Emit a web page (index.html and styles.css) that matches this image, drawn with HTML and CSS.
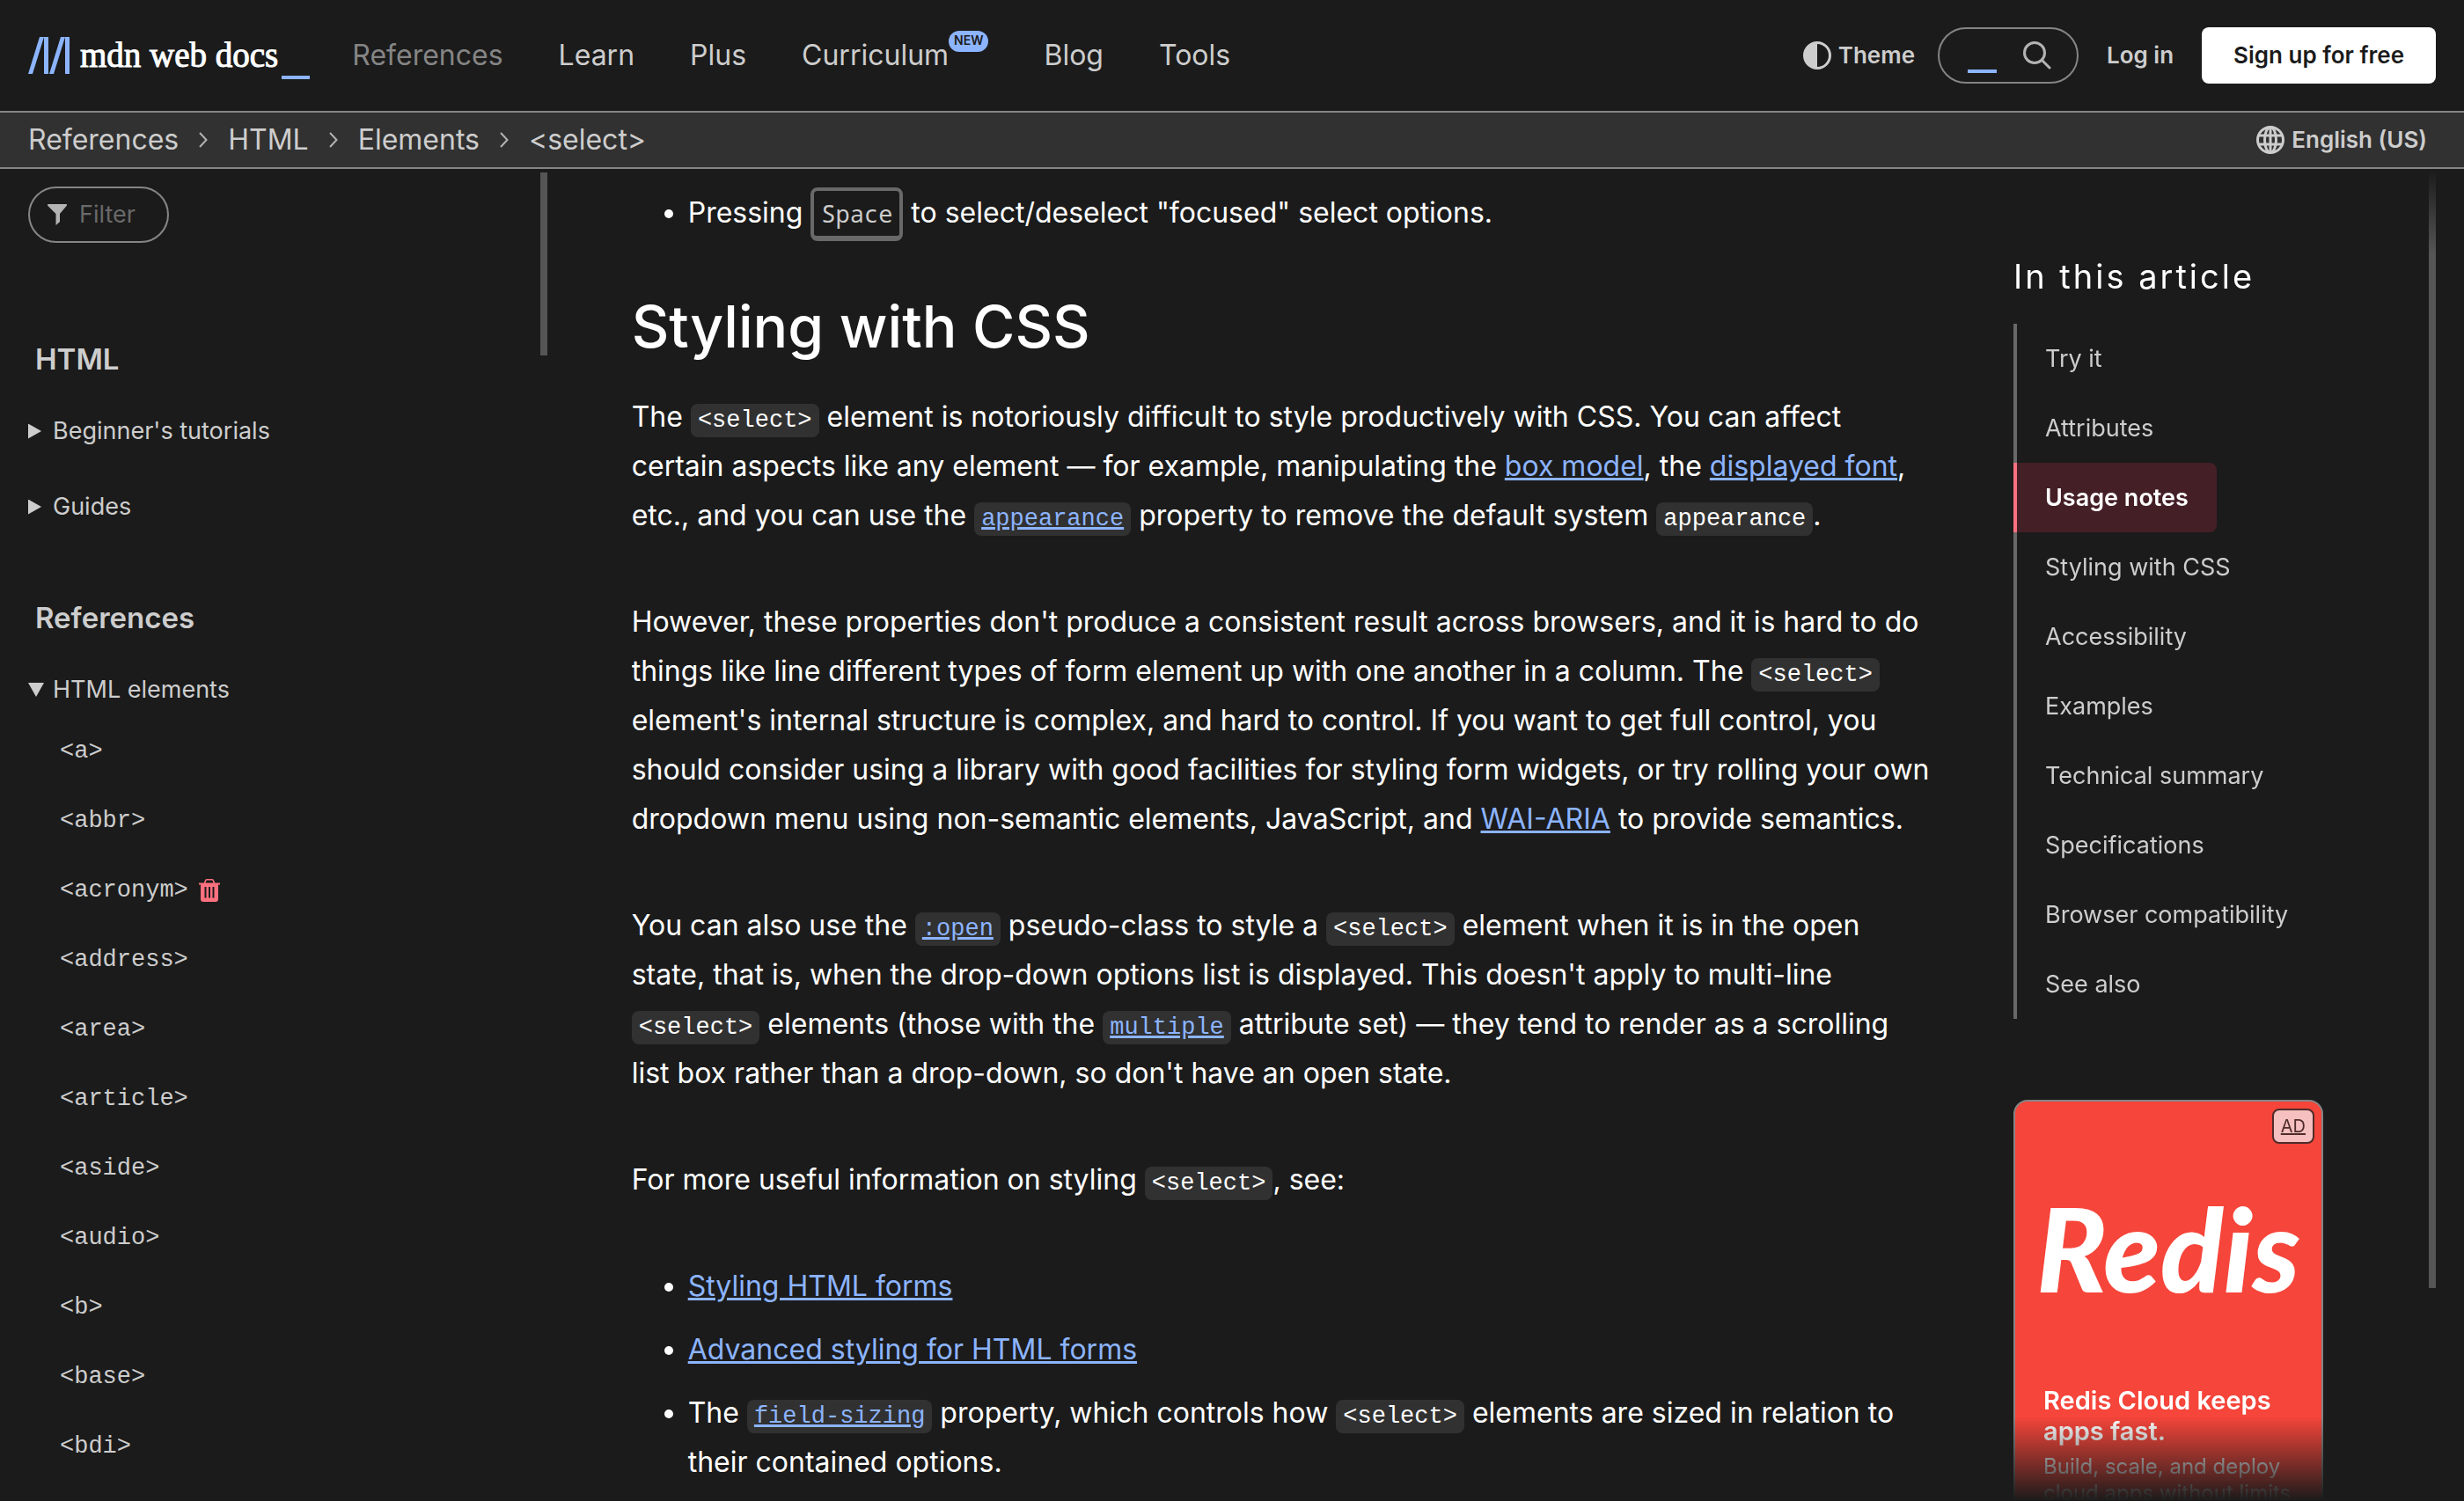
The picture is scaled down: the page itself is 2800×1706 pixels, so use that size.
FILE: index.html
```html
<!DOCTYPE html>
<html lang="en-US">
<head>
<meta charset="utf-8">
<title>&lt;select&gt; - HTML | MDN</title>
<link rel="stylesheet" href="styles.css">
</head>
<body>
<div class="app">
  <header class="top">
    <a class="logo" href="#">
      <svg class="logo-mark" viewBox="0 0 47 42" aria-hidden="true"><path d="M13 0h5L5 42H0zM18 0h5v42h-5zM37 0h5L29 42h-5zM42 0h5v42h-5z"/></svg>
      <span class="logo-name">mdn web docs</span>
      <span class="logo-cursor"></span>
    </a>
    <nav class="menu" aria-label="Main">
      <a class="menu-link current" href="#">References</a>
      <a class="menu-link" href="#">Learn</a>
      <a class="menu-link" href="#">Plus</a>
      <a class="menu-link" href="#">Curriculum<sup class="badge">NEW</sup></a>
      <a class="menu-link" href="#">Blog</a>
      <a class="menu-link" href="#">Tools</a>
    </nav>
    <div class="actions">
      <button class="plain-button" type="button">
        <svg class="icon" viewBox="0 0 32 32" aria-hidden="true"><circle cx="16" cy="16" r="14.500" fill="none" stroke="currentColor" stroke-width="3"/><path d="M16 1v30A15 15 0 0 1 16 1z" fill="currentColor"/></svg>Theme
      </button>
      <form class="search">
        <input class="search-input" type="search" aria-label="Search MDN">
        <span class="search-cursor"></span>
        <button class="search-button" type="submit" aria-label="Search"><svg class="icon" viewBox="0 0 32 32" aria-hidden="true"><g fill="none" stroke="currentColor" stroke-width="3" stroke-linecap="round"><circle cx="13" cy="13" r="11.500"/><path d="M21.500 21.500 30 30"/></g></svg></button>
      </form>
      <a class="login" href="#">Log in</a>
      <a class="signup" href="#">Sign up for free</a>
    </div>
  </header>

  <div class="crumb-bar">
    <ol class="crumbs">
      <li class="crumb"><a href="#">References</a></li>
      <li class="crumb"><svg class="chevron" viewBox="0 0 10 18" aria-hidden="true"><path d="M1 1l7.500 8L1 17"/></svg><a href="#">HTML</a></li>
      <li class="crumb"><svg class="chevron" viewBox="0 0 10 18" aria-hidden="true"><path d="M1 1l7.500 8L1 17"/></svg><a href="#">Elements</a></li>
      <li class="crumb"><svg class="chevron" viewBox="0 0 10 18" aria-hidden="true"><path d="M1 1l7.500 8L1 17"/></svg><a href="#">&lt;select&gt;</a></li>
    </ol>
    <button class="plain-button" type="button">
      <svg class="icon" viewBox="0 0 32 32" aria-hidden="true"><g fill="none" stroke="currentColor" stroke-width="3"><circle cx="16" cy="16" r="14.500"/><ellipse cx="16" cy="16" rx="6.500" ry="14.500"/><path d="M16 1v30M2.500 11h27M2.500 21h27"/></g></svg>English (US)
    </button>
  </div>

  <div class="columns">
    <aside class="sidebar">
      <div class="sidebar-body">
        <label class="filter">
          <svg class="funnel" viewBox="0 0 22 24" aria-hidden="true"><path d="M1 0h20q2 0 .6 2L14 11v9l-4.500 4V11L.4 2Q-.8 0 1 0z"/></svg>
          <input class="filter-input" type="text" placeholder="Filter" aria-label="Filter">
        </label>
        <h2 class="side-title first">HTML</h2>
        <details class="group"><summary>Beginner's tutorials</summary></details>
        <details class="group"><summary>Guides</summary></details>
        <h2 class="side-title">References</h2>
        <details class="group" open>
          <summary>HTML elements</summary>
          <ul class="tags">
            <li><a href="#">&lt;a&gt;</a></li>
            <li><a href="#">&lt;abbr&gt;</a></li>
            <li><a href="#">&lt;acronym&gt;</a><svg class="trash" viewBox="0 0 24 26" role="img" aria-label="Deprecated"><path fill="none" stroke="currentColor" stroke-width="1.600" d="M6.500 5 7.500 2q.3-1.200 1.500-1.200h6q1.200 0 1.500 1.200l1 3"/><path fill="currentColor" fill-rule="evenodd" d="M0 4.500h24v2h-2V23q0 3-3 3H5q-3 0-3-3V6.500H0zM6.500 9v12.500h2V9zm4.500 0v12.500h2V9zm4.500 0v12.500h2V9z"/></svg></li>
            <li><a href="#">&lt;address&gt;</a></li>
            <li><a href="#">&lt;area&gt;</a></li>
            <li><a href="#">&lt;article&gt;</a></li>
            <li><a href="#">&lt;aside&gt;</a></li>
            <li><a href="#">&lt;audio&gt;</a></li>
            <li><a href="#">&lt;b&gt;</a></li>
            <li><a href="#">&lt;base&gt;</a></li>
            <li><a href="#">&lt;bdi&gt;</a></li>
          </ul>
        </details>
      </div>
      <div class="scroll-track"><div class="scroll-thumb side-thumb"></div></div>
    </aside>

    <main class="article">
      <ul>
        <li>Pressing <kbd>Space</kbd> to select/deselect "focused" select options.</li>
      </ul>
      <h2>Styling with CSS</h2>
      <p>The <code>&lt;select&gt;</code> element is notoriously difficult to style productively with CSS. You can affect certain aspects like any element — for example, manipulating the <a href="#">box model</a>, the <a href="#">displayed font</a>, etc., and you can use the <a href="#"><code>appearance</code></a> property to remove the default system <code>appearance</code>.</p>
      <p>However, these properties don't produce a consistent result across browsers, and it is hard to do things like line different types of form element up with one another in a column. The <code>&lt;select&gt;</code> element's internal structure is complex, and hard to control. If you want to get full control, you should consider using a library with good facilities for styling form widgets, or try rolling your own dropdown menu using non-semantic elements, JavaScript, and <a href="#">WAI-ARIA</a> to provide semantics.</p>
      <p>You can also use the <a href="#"><code>:open</code></a> pseudo-class to style a <code>&lt;select&gt;</code> element when it is in the open state, that is, when the drop-down options list is displayed. This doesn't apply to multi-line <code>&lt;select&gt;</code> elements (those with the <a href="#"><code>multiple</code></a> attribute set) — they tend to render as a scrolling list box rather than a drop-down, so don't have an open state.</p>
      <p>For more useful information on styling <code>&lt;select&gt;</code>, see:</p>
      <ul>
        <li><a href="#">Styling HTML forms</a></li>
        <li><a href="#">Advanced styling for HTML forms</a></li>
        <li>The <a href="#"><code>field-sizing</code></a> property, which controls how <code>&lt;select&gt;</code> elements are sized in relation to their contained options.</li>
      </ul>
    </main>

    <aside class="rail">
      <div class="rail-body">
        <nav class="toc" aria-labelledby="toc-title">
          <h2 class="toc-title" id="toc-title">In this article</h2>
          <ul class="toc-list">
            <li><a href="#">Try it</a></li>
            <li><a href="#">Attributes</a></li>
            <li><a class="active" href="#">Usage notes</a></li>
            <li><a href="#">Styling with CSS</a></li>
            <li><a href="#">Accessibility</a></li>
            <li><a href="#">Examples</a></li>
            <li><a href="#">Technical summary</a></li>
            <li><a href="#">Specifications</a></li>
            <li><a href="#">Browser compatibility</a></li>
            <li><a href="#">See also</a></li>
          </ul>
        </nav>
        <section class="ad" aria-label="Advertisement">
          <a class="ad-note" href="#">AD</a>
          <div class="ad-logo">Redis</div>
          <a class="ad-copy" href="#">
            <strong>Redis Cloud keeps apps fast.</strong>
            <span>Build, scale, and deploy cloud apps without limits</span>
          </a>
        </section>
      </div>
      <div class="scroll-track"><div class="scroll-thumb page-thumb"></div></div>
    </aside>
  </div>
</div>
</body>
</html>
```
FILE: styles.css
```css
:root {
  --bg: #1b1b1b;
  --bg-2: #313131;
  --text: #ffffff;
  --text-2: #cdcdcd;
  --muted: #858585;
  --line: #696969;
  --thumb: #555555;
  --link: #8cb4ff;
  --red: #ff707f;
  --sans: Inter, "Noto Sans", sans-serif;
  --mono: "Liberation Mono", monospace;
}

* { box-sizing: border-box; }

body {
  margin: 0;
  background: var(--bg);
  color: var(--text);
  font: 32px/56px var(--sans);
}

a { color: inherit; text-decoration: none; }
ul, ol, h2, p { margin: 0; padding: 0; }
button, input { font: inherit; color: inherit; background: none; border: 0; padding: 0; margin: 0; }
svg { flex: none; display: block; }

.app {
  display: flex;
  flex-direction: column;
  height: 100vh;
  overflow: hidden;
}

/* Top bar */
.top {
  display: flex;
  align-items: center;
  height: 126px;
  flex: none;
  padding: 0 32px;
  color: var(--text-2);
}

.logo { display: flex; align-items: center; color: var(--text); }
.logo-mark { width: 47px; height: 42px; fill: var(--link); }
.logo-name {
  margin-left: 12px;
  font-family: "Liberation Serif", serif;
  font-size: 39px;
  -webkit-text-stroke: 1px currentColor;
}
.logo-cursor { width: 32px; height: 4px; margin: 50px 0 0 4px; background: var(--link); }

.menu { display: flex; gap: 63px; margin-left: 48px; }
.menu-link { display: flex; }
.menu-link.current { color: var(--muted); }
.badge {
  align-self: flex-start;
  height: 24px;
  padding: 0 6px;
  border-radius: 12px;
  background: var(--link);
  color: var(--bg);
  font-size: 14px;
  font-weight: 600;
  line-height: 22px;
}

.actions {
  display: flex;
  align-items: center;
  margin-left: auto;
  font-size: 26px;
  font-weight: 600;
}
.plain-button {
  display: flex;
  align-items: center;
  gap: 8px;
  color: var(--text-2);
  font-size: 26px;
  font-weight: 600;
}
.icon { width: 32px; height: 32px; }

.search {
  display: flex;
  align-items: center;
  width: 160px;
  height: 64px;
  margin: 0 32px 0 26px;
  padding: 0 29px 0 32px;
  border: 2px solid var(--muted);
  border-radius: 32px;
}
.search-input { width: 0; outline: 0; appearance: none; }
.search-cursor { width: 33px; height: 4px; margin-top: 36px; background: var(--link); }
.search-button { margin-left: auto; color: #b3b3b3; }

.signup {
  display: flex;
  align-items: center;
  height: 64px;
  margin-left: 32px;
  padding: 0 36px;
  border-radius: 8px;
  background: #fff;
  color: var(--bg);
}

/* Breadcrumbs */
.crumb-bar {
  display: flex;
  align-items: center;
  justify-content: space-between;
  height: 66px;
  flex: none;
  padding: 0 42px 0 32px;
  border: solid var(--muted);
  border-width: 2px 0;
  background: var(--bg-2);
  color: var(--text-2);
}
.crumbs { display: flex; list-style: none; }
.crumb { display: flex; align-items: center; }
.chevron {
  width: 10px;
  height: 18px;
  margin: 0 23px;
  fill: none;
  stroke: #b3b3b3;
  stroke-width: 2;
}

/* Page columns */
.columns {
  display: grid;
  grid-template-columns: 1fr 2.48fr 480px;
  gap: 88px;
  flex: 1;
  min-height: 0;
  padding: 0 32px;
}

.scroll-track { flex: none; width: 8px; padding-top: 4px; }
.scroll-thumb { background: var(--thumb); }
.side-thumb { height: 208px; }
.page-thumb { height: 84%; }

/* Sidebar */
.sidebar {
  display: flex;
  overflow: hidden;
  margin-right: 8px;
  color: var(--text-2);
  font-size: 27px;
}
.sidebar-body { flex: 1; padding-top: 20px; }

.filter {
  display: flex;
  align-items: center;
  gap: 14px;
  width: 160px;
  height: 64px;
  padding: 0 20px;
  border: 2px solid var(--muted);
  border-radius: 32px;
}
.funnel { width: 22px; height: 24px; fill: #b3b3b3; }
.filter-input { width: 100%; min-width: 0; outline: 0; }
.filter-input::placeholder { color: var(--line); opacity: 1; }

.side-title {
  margin: 66px 0 22px;
  padding-left: 8px;
  font-size: 33px;
  font-weight: 600;
}
.side-title.first { margin-top: 104px; }

.group summary {
  display: flex;
  align-items: center;
  height: 64px;
  list-style: none;
}
.group + .group { margin-top: 22px; }
.group summary::before {
  content: "";
  width: 15px;
  height: 17px;
  margin-right: 13px;
  background: currentColor;
  clip-path: polygon(0 0, 100% 50%, 0 100%);
}
.group[open] summary::before {
  width: 18px;
  height: 16px;
  margin-right: 10px;
  clip-path: polygon(0 0, 100% 0, 50% 100%);
}

.tags { margin-top: -2px; list-style: none; padding-left: 36px; font-family: var(--mono); }
.tags li { display: flex; align-items: center; height: 79px; }
.trash { width: 24px; height: 26px; margin-left: 12px; color: var(--red); }

/* Article */
.article { min-width: 0; overflow: hidden; padding: 22px 4px 0 0; }
.article h2 {
  margin: 60px 0 34px;
  font-size: 66px;
  font-weight: 500;
  line-height: 82px;
}
.article p { margin-bottom: 65px; }
.article ul { padding-left: 64px; }
.article li + li { margin-top: 16px; }
.article a { color: var(--link); text-decoration: underline; }
.article code {
  padding: 4px 8px;
  border-radius: 8px;
  background: var(--bg-2);
  font-family: var(--mono);
  font-size: 27px;
  line-height: 1;
}
.article kbd {
  padding: 7px 8px;
  border: 4px solid var(--line);
  border-bottom-width: 6px;
  border-radius: 8px;
  color: var(--text-2);
  font-family: "Noto Sans Mono", "DejaVu Sans Mono", monospace;
  font-size: 27px;
  line-height: 1;
}

/* Right rail */
.rail {
  display: flex;
  overflow: hidden;
  mask-image: linear-gradient(to bottom, transparent 0, #000 96px, #000 calc(100% - 96px), transparent 100%);
}
.rail-body { flex: 1; padding-top: 94px; }

.toc-title {
  font-size: 38px;
  font-weight: 400;
  letter-spacing: 3px;
}
.toc-list {
  display: flex;
  flex-direction: column;
  margin-top: 26px;
  list-style: none;
  color: var(--text-2);
  font-size: 27px;
}
.toc-list li { display: flex; border-left: 4px solid var(--line); }
.toc-list a { display: flex; align-items: center; height: 79px; padding: 0 32px; }
.toc-list li:has(.active) { border-color: var(--red); }
.toc-list .active {
  border-radius: 0 8px 8px 0;
  background: #441f26;
  color: var(--text);
  font-weight: 600;
}

.ad {
  position: relative;
  width: 352px;
  margin-top: 92px;
  padding: 100px 8px 32px;
  border: 2px solid var(--muted);
  border-radius: 16px;
  background: #f6453a;
}
.ad-note {
  position: absolute;
  top: 8px;
  right: 8px;
  height: 40px;
  padding: 0 8px;
  border: 2px solid #4f2c2b;
  border-radius: 8px;
  background: #f5c0bf;
  color: #4f2c2b;
  font-size: 20px;
  line-height: 36px;
  text-decoration: underline;
}
.ad-logo {
  font-family: Lato, sans-serif;
  font-size: 132px;
  font-weight: 900;
  font-style: italic;
  line-height: 132px;
  text-align: center;
}
.ad-copy {
  display: flex;
  flex-direction: column;
  gap: 8px;
  margin-top: 90px;
  padding: 0 24px;
}
.ad-copy strong { font-size: 29px; font-weight: 600; line-height: 35px; }
.ad-copy span { font-size: 24px; line-height: 30px; }
```
